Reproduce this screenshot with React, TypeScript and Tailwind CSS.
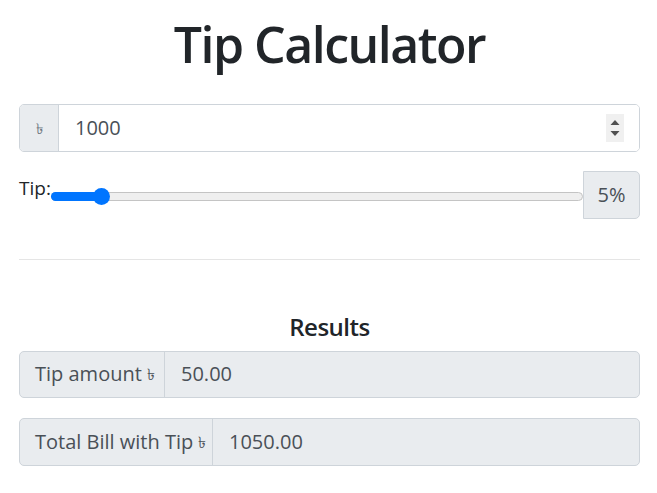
import React from "react";

const font = { fontFamily: '"Segoe UI", "Open Sans", "Noto Sans", sans-serif' };

function Spinner() {
  return (
    <svg width="18" height="28" viewBox="0 0 18 28" className="shrink-0">
      <rect x="0" y="0" width="18" height="28" fill="#f0f0f0" />
      <path d="M9 6 L13.5 11 L4.5 11 Z" fill="#505050" />
      <path d="M9 22 L13.5 17 L4.5 17 Z" fill="#505050" />
    </svg>
  );
}

export default function App() {
  return (
    <div className="w-[657px] h-[493px] bg-white text-[#212529]" style={font}>
      <div className="ml-[19px] w-[621px]">
        <h1 className="text-center text-[50px] font-semibold leading-[1.2] pt-[14px] mb-[30px] tracking-[-1.5px]">
          Tip Calculator
        </h1>

        <div className="flex h-[48px] rounded-[5px] border border-[#ced4da] overflow-hidden">
          <div className="w-[39px] bg-[#e9ecef] border-r border-[#ced4da] flex items-center justify-center text-[15px] text-[#6c757d]">
            ৳
          </div>
          <div className="flex-1 flex items-center pl-[16px] pr-[15px] bg-white text-[20px] text-[#495057]">
            <span className="flex-1">1000</span>
            <Spinner />
          </div>
        </div>

        <div className="flex items-start mt-[19px] h-[48px]">
          <span className="text-[19px] leading-none mt-[8px] text-[#212529]">Tip:</span>
          <div className="relative flex-1 h-[48px]">
            <div className="absolute left-0 right-0 top-[21px] h-[9px] rounded-full bg-[#efefef] border border-[#c4c4c4]" />
            <div className="absolute left-0 w-[50px] top-[21px] h-[9px] rounded-full bg-[#0075ff]" />
            <div className="absolute left-[42px] top-[17px] w-[17px] h-[17px] rounded-full bg-[#0075ff]" />
          </div>
          <div className="w-[57px] h-[48px] rounded-r-[5px] border border-[#ced4da] bg-[#e9ecef] flex items-center justify-center text-[20px] text-[#495057]">
            5%
          </div>
        </div>

        <hr className="mt-[40px] border-t border-[#e5e5e5]" />

        <h4 className="text-center text-[24px] font-semibold leading-[1.2] mt-[53px] mb-[9px] tracking-[-0.5px]">Results</h4>

        <div className="flex h-[47px] rounded-[5px] border border-[#ced4da] bg-[#e9ecef] text-[20px] text-[#495057]">
          <div className="w-[145px] border-r border-[#ced4da] flex items-center pl-[15px]">
            Tip amount <span className="text-[16px] ml-[5px]">৳</span>
          </div>
          <div className="flex-1 flex items-center pl-[16px]">50.00</div>
        </div>

        <div className="mt-[20px] flex h-[48px] rounded-[5px] border border-[#ced4da] bg-[#e9ecef] text-[20px] text-[#495057]">
          <div className="w-[193px] border-r border-[#ced4da] flex items-center pl-[15px]">
            Total Bill with Tip <span className="text-[16px] ml-[5px]">৳</span>
          </div>
          <div className="flex-1 flex items-center pl-[16px]">1050.00</div>
        </div>
      </div>
    </div>
  );
}
